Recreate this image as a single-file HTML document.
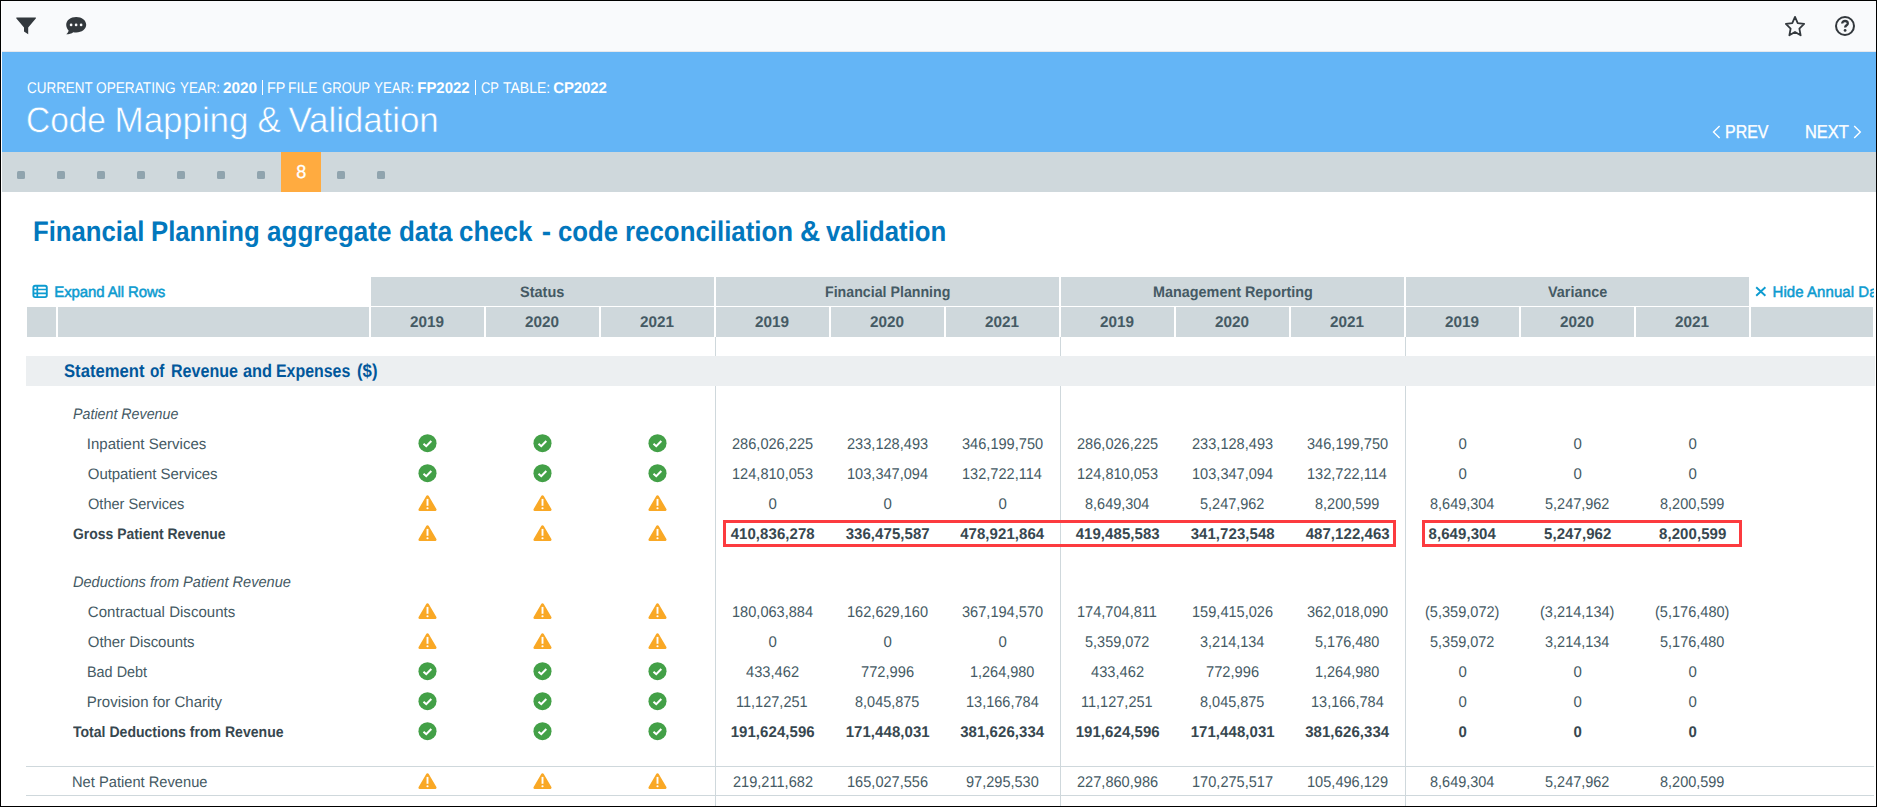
<!DOCTYPE html>
<html lang="en"><head><meta charset="utf-8"><title>Code Mapping &amp; Validation</title>
<style>
html,body{margin:0;padding:0;}
body{width:1877px;height:807px;overflow:hidden;background:#000;font-family:"Liberation Sans", sans-serif;}
#page{position:absolute;left:1px;top:1px;width:1875px;height:805px;background:#fff;overflow:hidden;}
#wrap{position:absolute;left:-1px;top:-1px;width:1877px;height:807px;}
.b{position:absolute;display:block;box-sizing:content-box;}
.t{position:absolute;white-space:pre;line-height:1;font-family:"Liberation Sans", sans-serif;text-rendering:geometricPrecision;}
</style></head><body>
<div id="page"><div id="wrap">
<div class="b" style="left:2px;top:1px;width:1874px;height:51px;background:#f9fafc;"></div>
<div class="b" style="left:2px;top:51px;width:1874px;height:1px;background:#e6e8ec;"></div>
<div class="b" style="left:2px;top:52px;width:1874px;height:100px;background:#64b5f6;"></div>
<div class="b" style="left:2px;top:152px;width:1874px;height:40px;background:#cfd8dc;"></div>
<div class="b" style="left:281px;top:152px;width:40px;height:40px;background:#ffab40;"></div>
<div class="b" style="left:17px;top:170.5px;width:8px;height:8px;background:#90a4ae;border-radius:1.5px;"></div>
<div class="b" style="left:57px;top:170.5px;width:8px;height:8px;background:#90a4ae;border-radius:1.5px;"></div>
<div class="b" style="left:97px;top:170.5px;width:8px;height:8px;background:#90a4ae;border-radius:1.5px;"></div>
<div class="b" style="left:137px;top:170.5px;width:8px;height:8px;background:#90a4ae;border-radius:1.5px;"></div>
<div class="b" style="left:177px;top:170.5px;width:8px;height:8px;background:#90a4ae;border-radius:1.5px;"></div>
<div class="b" style="left:217px;top:170.5px;width:8px;height:8px;background:#90a4ae;border-radius:1.5px;"></div>
<div class="b" style="left:257px;top:170.5px;width:8px;height:8px;background:#90a4ae;border-radius:1.5px;"></div>
<div class="b" style="left:337px;top:170.5px;width:8px;height:8px;background:#90a4ae;border-radius:1.5px;"></div>
<div class="b" style="left:377px;top:170.5px;width:8px;height:8px;background:#90a4ae;border-radius:1.5px;"></div>
<div class="b" style="left:261.8px;top:80.3px;width:1.1px;height:14.4px;background:#fff;"></div>
<div class="b" style="left:474.8px;top:80.3px;width:1.1px;height:14.4px;background:#fff;"></div>
<div class="b" style="left:371px;top:277px;width:343px;height:29px;background:#cfd8dc;"></div>
<div class="b" style="left:716px;top:277px;width:343px;height:29px;background:#cfd8dc;"></div>
<div class="b" style="left:1061px;top:277px;width:343px;height:29px;background:#cfd8dc;"></div>
<div class="b" style="left:1406px;top:277px;width:343px;height:29px;background:#cfd8dc;"></div>
<div class="b" style="left:27px;top:307px;width:29px;height:30px;background:#cfd8dc;"></div>
<div class="b" style="left:58px;top:307px;width:311px;height:30px;background:#cfd8dc;"></div>
<div class="b" style="left:371px;top:307px;width:113px;height:30px;background:#cfd8dc;"></div>
<div class="b" style="left:486px;top:307px;width:113px;height:30px;background:#cfd8dc;"></div>
<div class="b" style="left:601px;top:307px;width:113px;height:30px;background:#cfd8dc;"></div>
<div class="b" style="left:716px;top:307px;width:113px;height:30px;background:#cfd8dc;"></div>
<div class="b" style="left:831px;top:307px;width:113px;height:30px;background:#cfd8dc;"></div>
<div class="b" style="left:946px;top:307px;width:113px;height:30px;background:#cfd8dc;"></div>
<div class="b" style="left:1061px;top:307px;width:113px;height:30px;background:#cfd8dc;"></div>
<div class="b" style="left:1176px;top:307px;width:113px;height:30px;background:#cfd8dc;"></div>
<div class="b" style="left:1291px;top:307px;width:113px;height:30px;background:#cfd8dc;"></div>
<div class="b" style="left:1406px;top:307px;width:113px;height:30px;background:#cfd8dc;"></div>
<div class="b" style="left:1521px;top:307px;width:113px;height:30px;background:#cfd8dc;"></div>
<div class="b" style="left:1636px;top:307px;width:113px;height:30px;background:#cfd8dc;"></div>
<div class="b" style="left:1751px;top:307px;width:122px;height:30px;background:#cfd8dc;"></div>
<div class="b" style="left:715px;top:337px;width:1px;height:469px;background:#cfd8dc;"></div>
<div class="b" style="left:1060px;top:337px;width:1px;height:469px;background:#cfd8dc;"></div>
<div class="b" style="left:1405px;top:337px;width:1px;height:469px;background:#cfd8dc;"></div>
<div class="b" style="left:26px;top:356px;width:1849px;height:30px;background:#eceff1;"></div>
<div class="b" style="left:26px;top:766px;width:1848px;height:1px;background:#cfd8dc;"></div>
<div class="b" style="left:26px;top:795px;width:1848px;height:1px;background:#cfd8dc;"></div>
<div class="b" style="left:723px;top:520px;width:667px;height:21px;background:transparent;border:3px solid #fc3b3f;"></div>
<div class="b" style="left:1422px;top:520px;width:314px;height:21px;background:transparent;border:3px solid #fc3b3f;"></div>
<svg class="b" style="left:416px;top:432px" width="22" height="22" viewBox="0 0 22 22"><g transform="translate(11.50,11.20)"><circle r="9.05" fill="#43a047"/><path d="M-4.0 0.5 L-1.25 2.95 L3.8 -2.2" fill="none" stroke="#fff" stroke-width="2"/></g></svg>
<svg class="b" style="left:531px;top:432px" width="22" height="22" viewBox="0 0 22 22"><g transform="translate(11.50,11.20)"><circle r="9.05" fill="#43a047"/><path d="M-4.0 0.5 L-1.25 2.95 L3.8 -2.2" fill="none" stroke="#fff" stroke-width="2"/></g></svg>
<svg class="b" style="left:646px;top:432px" width="22" height="22" viewBox="0 0 22 22"><g transform="translate(11.50,11.20)"><circle r="9.05" fill="#43a047"/><path d="M-4.0 0.5 L-1.25 2.95 L3.8 -2.2" fill="none" stroke="#fff" stroke-width="2"/></g></svg>
<svg class="b" style="left:416px;top:462px" width="22" height="22" viewBox="0 0 22 22"><g transform="translate(11.50,11.20)"><circle r="9.05" fill="#43a047"/><path d="M-4.0 0.5 L-1.25 2.95 L3.8 -2.2" fill="none" stroke="#fff" stroke-width="2"/></g></svg>
<svg class="b" style="left:531px;top:462px" width="22" height="22" viewBox="0 0 22 22"><g transform="translate(11.50,11.20)"><circle r="9.05" fill="#43a047"/><path d="M-4.0 0.5 L-1.25 2.95 L3.8 -2.2" fill="none" stroke="#fff" stroke-width="2"/></g></svg>
<svg class="b" style="left:646px;top:462px" width="22" height="22" viewBox="0 0 22 22"><g transform="translate(11.50,11.20)"><circle r="9.05" fill="#43a047"/><path d="M-4.0 0.5 L-1.25 2.95 L3.8 -2.2" fill="none" stroke="#fff" stroke-width="2"/></g></svg>
<svg class="b" style="left:416px;top:492px" width="22" height="22" viewBox="0 0 22 22"><g transform="translate(11.50,11.00)"><path d="M0 -6.5 L7.75 6.7 L-7.75 6.7 Z" fill="#f9a825" stroke="#f9a825" stroke-width="2.6" stroke-linejoin="round"/><rect x="-0.95" y="-4.1" width="1.9" height="6.9" fill="#fff"/><circle cx="0" cy="5.25" r="1.1" fill="#fff"/></g></svg>
<svg class="b" style="left:531px;top:492px" width="22" height="22" viewBox="0 0 22 22"><g transform="translate(11.50,11.00)"><path d="M0 -6.5 L7.75 6.7 L-7.75 6.7 Z" fill="#f9a825" stroke="#f9a825" stroke-width="2.6" stroke-linejoin="round"/><rect x="-0.95" y="-4.1" width="1.9" height="6.9" fill="#fff"/><circle cx="0" cy="5.25" r="1.1" fill="#fff"/></g></svg>
<svg class="b" style="left:646px;top:492px" width="22" height="22" viewBox="0 0 22 22"><g transform="translate(11.50,11.00)"><path d="M0 -6.5 L7.75 6.7 L-7.75 6.7 Z" fill="#f9a825" stroke="#f9a825" stroke-width="2.6" stroke-linejoin="round"/><rect x="-0.95" y="-4.1" width="1.9" height="6.9" fill="#fff"/><circle cx="0" cy="5.25" r="1.1" fill="#fff"/></g></svg>
<svg class="b" style="left:416px;top:522px" width="22" height="22" viewBox="0 0 22 22"><g transform="translate(11.50,11.00)"><path d="M0 -6.5 L7.75 6.7 L-7.75 6.7 Z" fill="#f9a825" stroke="#f9a825" stroke-width="2.6" stroke-linejoin="round"/><rect x="-0.95" y="-4.1" width="1.9" height="6.9" fill="#fff"/><circle cx="0" cy="5.25" r="1.1" fill="#fff"/></g></svg>
<svg class="b" style="left:531px;top:522px" width="22" height="22" viewBox="0 0 22 22"><g transform="translate(11.50,11.00)"><path d="M0 -6.5 L7.75 6.7 L-7.75 6.7 Z" fill="#f9a825" stroke="#f9a825" stroke-width="2.6" stroke-linejoin="round"/><rect x="-0.95" y="-4.1" width="1.9" height="6.9" fill="#fff"/><circle cx="0" cy="5.25" r="1.1" fill="#fff"/></g></svg>
<svg class="b" style="left:646px;top:522px" width="22" height="22" viewBox="0 0 22 22"><g transform="translate(11.50,11.00)"><path d="M0 -6.5 L7.75 6.7 L-7.75 6.7 Z" fill="#f9a825" stroke="#f9a825" stroke-width="2.6" stroke-linejoin="round"/><rect x="-0.95" y="-4.1" width="1.9" height="6.9" fill="#fff"/><circle cx="0" cy="5.25" r="1.1" fill="#fff"/></g></svg>
<svg class="b" style="left:416px;top:600px" width="22" height="22" viewBox="0 0 22 22"><g transform="translate(11.50,11.00)"><path d="M0 -6.5 L7.75 6.7 L-7.75 6.7 Z" fill="#f9a825" stroke="#f9a825" stroke-width="2.6" stroke-linejoin="round"/><rect x="-0.95" y="-4.1" width="1.9" height="6.9" fill="#fff"/><circle cx="0" cy="5.25" r="1.1" fill="#fff"/></g></svg>
<svg class="b" style="left:531px;top:600px" width="22" height="22" viewBox="0 0 22 22"><g transform="translate(11.50,11.00)"><path d="M0 -6.5 L7.75 6.7 L-7.75 6.7 Z" fill="#f9a825" stroke="#f9a825" stroke-width="2.6" stroke-linejoin="round"/><rect x="-0.95" y="-4.1" width="1.9" height="6.9" fill="#fff"/><circle cx="0" cy="5.25" r="1.1" fill="#fff"/></g></svg>
<svg class="b" style="left:646px;top:600px" width="22" height="22" viewBox="0 0 22 22"><g transform="translate(11.50,11.00)"><path d="M0 -6.5 L7.75 6.7 L-7.75 6.7 Z" fill="#f9a825" stroke="#f9a825" stroke-width="2.6" stroke-linejoin="round"/><rect x="-0.95" y="-4.1" width="1.9" height="6.9" fill="#fff"/><circle cx="0" cy="5.25" r="1.1" fill="#fff"/></g></svg>
<svg class="b" style="left:416px;top:630px" width="22" height="22" viewBox="0 0 22 22"><g transform="translate(11.50,11.00)"><path d="M0 -6.5 L7.75 6.7 L-7.75 6.7 Z" fill="#f9a825" stroke="#f9a825" stroke-width="2.6" stroke-linejoin="round"/><rect x="-0.95" y="-4.1" width="1.9" height="6.9" fill="#fff"/><circle cx="0" cy="5.25" r="1.1" fill="#fff"/></g></svg>
<svg class="b" style="left:531px;top:630px" width="22" height="22" viewBox="0 0 22 22"><g transform="translate(11.50,11.00)"><path d="M0 -6.5 L7.75 6.7 L-7.75 6.7 Z" fill="#f9a825" stroke="#f9a825" stroke-width="2.6" stroke-linejoin="round"/><rect x="-0.95" y="-4.1" width="1.9" height="6.9" fill="#fff"/><circle cx="0" cy="5.25" r="1.1" fill="#fff"/></g></svg>
<svg class="b" style="left:646px;top:630px" width="22" height="22" viewBox="0 0 22 22"><g transform="translate(11.50,11.00)"><path d="M0 -6.5 L7.75 6.7 L-7.75 6.7 Z" fill="#f9a825" stroke="#f9a825" stroke-width="2.6" stroke-linejoin="round"/><rect x="-0.95" y="-4.1" width="1.9" height="6.9" fill="#fff"/><circle cx="0" cy="5.25" r="1.1" fill="#fff"/></g></svg>
<svg class="b" style="left:416px;top:660px" width="22" height="22" viewBox="0 0 22 22"><g transform="translate(11.50,11.20)"><circle r="9.05" fill="#43a047"/><path d="M-4.0 0.5 L-1.25 2.95 L3.8 -2.2" fill="none" stroke="#fff" stroke-width="2"/></g></svg>
<svg class="b" style="left:531px;top:660px" width="22" height="22" viewBox="0 0 22 22"><g transform="translate(11.50,11.20)"><circle r="9.05" fill="#43a047"/><path d="M-4.0 0.5 L-1.25 2.95 L3.8 -2.2" fill="none" stroke="#fff" stroke-width="2"/></g></svg>
<svg class="b" style="left:646px;top:660px" width="22" height="22" viewBox="0 0 22 22"><g transform="translate(11.50,11.20)"><circle r="9.05" fill="#43a047"/><path d="M-4.0 0.5 L-1.25 2.95 L3.8 -2.2" fill="none" stroke="#fff" stroke-width="2"/></g></svg>
<svg class="b" style="left:416px;top:690px" width="22" height="22" viewBox="0 0 22 22"><g transform="translate(11.50,11.20)"><circle r="9.05" fill="#43a047"/><path d="M-4.0 0.5 L-1.25 2.95 L3.8 -2.2" fill="none" stroke="#fff" stroke-width="2"/></g></svg>
<svg class="b" style="left:531px;top:690px" width="22" height="22" viewBox="0 0 22 22"><g transform="translate(11.50,11.20)"><circle r="9.05" fill="#43a047"/><path d="M-4.0 0.5 L-1.25 2.95 L3.8 -2.2" fill="none" stroke="#fff" stroke-width="2"/></g></svg>
<svg class="b" style="left:646px;top:690px" width="22" height="22" viewBox="0 0 22 22"><g transform="translate(11.50,11.20)"><circle r="9.05" fill="#43a047"/><path d="M-4.0 0.5 L-1.25 2.95 L3.8 -2.2" fill="none" stroke="#fff" stroke-width="2"/></g></svg>
<svg class="b" style="left:416px;top:720px" width="22" height="22" viewBox="0 0 22 22"><g transform="translate(11.50,11.20)"><circle r="9.05" fill="#43a047"/><path d="M-4.0 0.5 L-1.25 2.95 L3.8 -2.2" fill="none" stroke="#fff" stroke-width="2"/></g></svg>
<svg class="b" style="left:531px;top:720px" width="22" height="22" viewBox="0 0 22 22"><g transform="translate(11.50,11.20)"><circle r="9.05" fill="#43a047"/><path d="M-4.0 0.5 L-1.25 2.95 L3.8 -2.2" fill="none" stroke="#fff" stroke-width="2"/></g></svg>
<svg class="b" style="left:646px;top:720px" width="22" height="22" viewBox="0 0 22 22"><g transform="translate(11.50,11.20)"><circle r="9.05" fill="#43a047"/><path d="M-4.0 0.5 L-1.25 2.95 L3.8 -2.2" fill="none" stroke="#fff" stroke-width="2"/></g></svg>
<svg class="b" style="left:416px;top:770px" width="22" height="22" viewBox="0 0 22 22"><g transform="translate(11.50,11.00)"><path d="M0 -6.5 L7.75 6.7 L-7.75 6.7 Z" fill="#f9a825" stroke="#f9a825" stroke-width="2.6" stroke-linejoin="round"/><rect x="-0.95" y="-4.1" width="1.9" height="6.9" fill="#fff"/><circle cx="0" cy="5.25" r="1.1" fill="#fff"/></g></svg>
<svg class="b" style="left:531px;top:770px" width="22" height="22" viewBox="0 0 22 22"><g transform="translate(11.50,11.00)"><path d="M0 -6.5 L7.75 6.7 L-7.75 6.7 Z" fill="#f9a825" stroke="#f9a825" stroke-width="2.6" stroke-linejoin="round"/><rect x="-0.95" y="-4.1" width="1.9" height="6.9" fill="#fff"/><circle cx="0" cy="5.25" r="1.1" fill="#fff"/></g></svg>
<svg class="b" style="left:646px;top:770px" width="22" height="22" viewBox="0 0 22 22"><g transform="translate(11.50,11.00)"><path d="M0 -6.5 L7.75 6.7 L-7.75 6.7 Z" fill="#f9a825" stroke="#f9a825" stroke-width="2.6" stroke-linejoin="round"/><rect x="-0.95" y="-4.1" width="1.9" height="6.9" fill="#fff"/><circle cx="0" cy="5.25" r="1.1" fill="#fff"/></g></svg>
<svg class="b" style="left:14px;top:15px" width="24" height="22" viewBox="0 0 24 22"><path d="M2.9 2.4 H21.3 Q22.6 2.4 21.8 3.5 L14.2 12.6 V19.2 L10 16.4 V12.6 L2.4 3.5 Q1.6 2.4 2.9 2.4 Z" fill="#33383d"/></svg>
<svg class="b" style="left:64px;top:15px" width="24" height="22" viewBox="0 0 24 22"><path d="M12.2 2.1 C17.8 2.1 22.2 5.5 22.2 9.8 C22.2 14.1 17.8 17.5 12.2 17.5 C11.2 17.5 10.2 17.4 9.3 17.2 C7.6 18.5 5 19.3 2.2 19.3 C3.6 18.2 4.4 16.8 4.6 15.4 C3.1 14 2.2 12 2.2 9.8 C2.2 5.5 6.6 2.1 12.2 2.1 Z" fill="#33383d"/><circle cx="7.1" cy="9.9" r="1.35" fill="#f9fafc"/><circle cx="12.1" cy="9.9" r="1.35" fill="#f9fafc"/><circle cx="17.1" cy="9.9" r="1.35" fill="#f9fafc"/></svg>
<svg class="b" style="left:1783px;top:14px" width="24" height="24" viewBox="0 0 24 24"><polygon points="12.00,2.90 14.71,9.14 21.12,9.95 16.38,14.61 17.64,21.35 12.00,18.00 6.36,21.35 7.62,14.61 2.88,9.95 9.29,9.14" fill="none" stroke="#33383d" stroke-width="1.8" stroke-linejoin="round"/></svg>
<svg class="b" style="left:1833px;top:14px" width="24" height="24" viewBox="0 0 24 24"><circle cx="12" cy="12" r="9" fill="none" stroke="#33383d" stroke-width="2"/><path d="M9.2 9.6 C9.2 7.9 10.5 7 12 7 C13.6 7 14.8 7.9 14.8 9.4 C14.8 11.3 12.1 11.3 12.1 13.6" fill="none" stroke="#33383d" stroke-width="2.3"/><circle cx="12.1" cy="16.4" r="1.4" fill="#33383d"/></svg>
<svg class="b" style="left:1710px;top:122px" width="14" height="20" viewBox="0 0 14 20"><path d="M9.6 3.9 L3.5 10 L9.6 16.1" fill="none" stroke="#fff" stroke-width="1.4"/></svg>
<svg class="b" style="left:1850px;top:122px" width="14" height="20" viewBox="0 0 14 20"><path d="M4.2 3.9 L10.3 10 L4.2 16.1" fill="none" stroke="#fff" stroke-width="1.4"/></svg>
<svg class="b" style="left:31px;top:283px" width="18" height="17" viewBox="0 0 18 17"><rect x="2.4" y="2.7" width="13.4" height="11.4" rx="1.8" fill="none" stroke="#0d9bd0" stroke-width="1.9"/><path d="M2.4 6.5 H15.8 M2.4 10.3 H15.8 M6.3 2.7 V14.1" stroke="#0d9bd0" stroke-width="1.7" fill="none"/></svg>
<svg class="b" style="left:1753px;top:284px" width="16" height="16" viewBox="0 0 16 16"><path d="M3.2 3.2 L12.4 11.8 M12.4 3.2 L3.2 11.8" stroke="#0d9bd0" stroke-width="1.9" fill="none"/></svg>
<span class="t" style="left:26.60px;top:81px;font-size:15px;color:#ffffff;transform:scale(0.8966,1.034);transform-origin:0 12px;">CURRENT</span>
<span class="t" style="left:96.30px;top:81px;font-size:15px;color:#ffffff;transform:scale(0.9115,1.034);transform-origin:0 12px;">OPERATING</span>
<span class="t" style="left:179.80px;top:81px;font-size:15px;color:#ffffff;transform:scale(0.8895,1.034);transform-origin:0 12px;">YEAR:</span>
<span class="t" style="left:222.90px;top:81px;font-size:15px;color:#ffffff;font-weight:700;transform:scale(1.0234,1.034);transform-origin:0 12px;">2020</span>
<span class="t" style="left:267.14px;top:81px;font-size:15px;color:#ffffff;transform:scale(0.9580,1.034);transform-origin:0 12px;">FP</span>
<span class="t" style="left:288.47px;top:81px;font-size:15px;color:#ffffff;transform:scale(0.9292,1.034);transform-origin:0 12px;">FILE</span>
<span class="t" style="left:322.20px;top:81px;font-size:15px;color:#ffffff;transform:scale(0.8745,1.034);transform-origin:0 12px;">GROUP</span>
<span class="t" style="left:374.30px;top:81px;font-size:15px;color:#ffffff;transform:scale(0.8895,1.034);transform-origin:0 12px;">YEAR:</span>
<span class="t" style="left:417.30px;top:81px;font-size:15px;color:#ffffff;font-weight:700;letter-spacing:-0.059px;transform:scale(1.0000,1.034);transform-origin:0 12px;">FP2022</span>
<span class="t" style="left:480.80px;top:81px;font-size:15px;color:#ffffff;transform:scale(0.8592,1.034);transform-origin:0 12px;">CP</span>
<span class="t" style="left:502.80px;top:81px;font-size:15px;color:#ffffff;transform:scale(0.9311,1.034);transform-origin:0 12px;">TABLE:</span>
<span class="t" style="left:553.30px;top:81px;font-size:15px;color:#ffffff;font-weight:700;letter-spacing:-0.153px;transform:scale(1.0000,1.034);transform-origin:0 12px;">CP2022</span>
<span class="t" style="left:26.44px;top:103px;font-size:35px;color:#ffffff;transform:scale(0.9556,1.015);transform-origin:0 29px;-webkit-text-stroke:0.55px #64b5f6;">Code</span>
<span class="t" style="left:114.60px;top:103px;font-size:35px;color:#ffffff;letter-spacing:-0.065px;transform:scale(1.0000,1.015);transform-origin:0 29px;-webkit-text-stroke:0.55px #64b5f6;">Mapping</span>
<span class="t" style="left:257.60px;top:103px;font-size:35px;color:#ffffff;transform:scale(1.0000,1.034);transform-origin:0 29px;-webkit-text-stroke:0.55px #64b5f6;">&amp;</span>
<span class="t" style="left:288.40px;top:103px;font-size:35px;color:#ffffff;letter-spacing:-0.084px;transform:scale(1.0000,1.015);transform-origin:0 29px;-webkit-text-stroke:0.55px #64b5f6;">Validation</span>
<span class="t" style="left:1724.71px;top:123px;font-size:18px;color:#ffffff;transform:scale(0.8852,1.034);transform-origin:0 15px;-webkit-text-stroke:0.35px #ffffff;">PREV</span>
<span class="t" style="left:1804.69px;top:123px;font-size:18px;color:#ffffff;transform:scale(0.9126,1.034);transform-origin:0 15px;-webkit-text-stroke:0.35px #ffffff;">NEXT</span>
<span class="t" style="left:296.25px;top:163px;font-size:18px;color:#ffffff;transform:scale(1.0000,1.034);transform-origin:0 15px;-webkit-text-stroke:0.3px #ffffff;">8</span>
<span class="t" style="left:33.18px;top:218px;font-size:28px;color:#0277bd;font-weight:700;transform:scale(0.9183,1.015);transform-origin:0 23px;">Financial</span>
<span class="t" style="left:151.38px;top:218px;font-size:28px;color:#0277bd;font-weight:700;transform:scale(0.9189,1.015);transform-origin:0 23px;">Planning</span>
<span class="t" style="left:267.40px;top:218px;font-size:28px;color:#0277bd;font-weight:700;transform:scale(0.9298,1.015);transform-origin:0 23px;">aggregate</span>
<span class="t" style="left:398.77px;top:218px;font-size:28px;color:#0277bd;font-weight:700;transform:scale(0.9281,1.015);transform-origin:0 23px;">data</span>
<span class="t" style="left:459.38px;top:218px;font-size:28px;color:#0277bd;font-weight:700;transform:scale(0.9249,1.015);transform-origin:0 23px;">check</span>
<span class="t" style="left:541.80px;top:218px;font-size:28px;color:#0277bd;font-weight:700;transform:scale(1.0000,1.034);transform-origin:0 23px;">-</span>
<span class="t" style="left:557.98px;top:218px;font-size:28px;color:#0277bd;font-weight:700;transform:scale(0.9204,1.015);transform-origin:0 23px;">code</span>
<span class="t" style="left:625.08px;top:218px;font-size:28px;color:#0277bd;font-weight:700;transform:scale(0.9237,1.015);transform-origin:0 23px;">reconciliation</span>
<span class="t" style="left:800.00px;top:218px;font-size:28px;color:#0277bd;font-weight:700;transform:scale(1.0000,1.034);transform-origin:0 23px;">&amp;</span>
<span class="t" style="left:825.80px;top:218px;font-size:28px;color:#0277bd;font-weight:700;transform:scale(0.9206,1.015);transform-origin:0 23px;">validation</span>
<span class="t" style="left:54.30px;top:285px;font-size:15px;color:#0d9bd0;letter-spacing:-0.113px;transform:scale(1.0000,1.015);transform-origin:0 12px;-webkit-text-stroke:0.5px #0d9bd0;">Expand All Rows</span>
<div class="b" style="left:1770px;top:281px;width:104px;height:25px;overflow:hidden;"><span class="t" style="left:2.60px;top:4px;font-size:15px;color:#0d9bd0;letter-spacing:0.051px;transform:scale(1.0000,1.015);transform-origin:0 12px;-webkit-text-stroke:0.5px #0d9bd0;">Hide Annual Data</span></div>
<span class="t" style="left:520.20px;top:285px;font-size:15px;color:#455a64;font-weight:700;transform:scale(0.9670,1.015);transform-origin:0 12px;">Status</span>
<span class="t" style="left:825.00px;top:285px;font-size:15px;color:#455a64;font-weight:700;transform:scale(0.9463,1.015);transform-origin:0 12px;">Financial Planning</span>
<span class="t" style="left:1152.94px;top:285px;font-size:15px;color:#455a64;font-weight:700;transform:scale(0.9594,1.015);transform-origin:0 12px;">Management Reporting</span>
<span class="t" style="left:1548.00px;top:285px;font-size:15px;color:#455a64;font-weight:700;transform:scale(0.9614,1.015);transform-origin:0 12px;">Variance</span>
<span class="t" style="left:410.05px;top:315px;font-size:15px;color:#455a64;font-weight:700;transform:scale(1.0204,1.034);transform-origin:0 12px;">2019</span>
<span class="t" style="left:525.05px;top:315px;font-size:15px;color:#455a64;font-weight:700;transform:scale(1.0204,1.034);transform-origin:0 12px;">2020</span>
<span class="t" style="left:640.05px;top:315px;font-size:15px;color:#455a64;font-weight:700;transform:scale(1.0204,1.034);transform-origin:0 12px;">2021</span>
<span class="t" style="left:755.05px;top:315px;font-size:15px;color:#455a64;font-weight:700;transform:scale(1.0204,1.034);transform-origin:0 12px;">2019</span>
<span class="t" style="left:870.05px;top:315px;font-size:15px;color:#455a64;font-weight:700;transform:scale(1.0204,1.034);transform-origin:0 12px;">2020</span>
<span class="t" style="left:985.05px;top:315px;font-size:15px;color:#455a64;font-weight:700;transform:scale(1.0204,1.034);transform-origin:0 12px;">2021</span>
<span class="t" style="left:1100.05px;top:315px;font-size:15px;color:#455a64;font-weight:700;transform:scale(1.0204,1.034);transform-origin:0 12px;">2019</span>
<span class="t" style="left:1215.05px;top:315px;font-size:15px;color:#455a64;font-weight:700;transform:scale(1.0204,1.034);transform-origin:0 12px;">2020</span>
<span class="t" style="left:1330.05px;top:315px;font-size:15px;color:#455a64;font-weight:700;transform:scale(1.0204,1.034);transform-origin:0 12px;">2021</span>
<span class="t" style="left:1445.05px;top:315px;font-size:15px;color:#455a64;font-weight:700;transform:scale(1.0204,1.034);transform-origin:0 12px;">2019</span>
<span class="t" style="left:1560.05px;top:315px;font-size:15px;color:#455a64;font-weight:700;transform:scale(1.0204,1.034);transform-origin:0 12px;">2020</span>
<span class="t" style="left:1675.05px;top:315px;font-size:15px;color:#455a64;font-weight:700;transform:scale(1.0204,1.034);transform-origin:0 12px;">2021</span>
<span class="t" style="left:64.00px;top:362px;font-size:18px;color:#01579b;font-weight:700;transform:scale(0.9250,1.015);transform-origin:0 15px;">Statement</span>
<span class="t" style="left:150.30px;top:362px;font-size:18px;color:#01579b;font-weight:700;transform:scale(0.8502,1.015);transform-origin:0 15px;">of</span>
<span class="t" style="left:170.51px;top:362px;font-size:18px;color:#01579b;font-weight:700;transform:scale(0.8930,1.015);transform-origin:0 15px;">Revenue</span>
<span class="t" style="left:242.90px;top:362px;font-size:18px;color:#01579b;font-weight:700;transform:scale(0.9095,1.015);transform-origin:0 15px;">and</span>
<span class="t" style="left:276.02px;top:362px;font-size:18px;color:#01579b;font-weight:700;transform:scale(0.8839,1.015);transform-origin:0 15px;">Expenses</span>
<span class="t" style="left:356.50px;top:362px;font-size:18px;color:#01579b;font-weight:700;transform:scale(0.9316,1.034);transform-origin:0 15px;">($)</span>
<span class="t" style="left:72.50px;top:407px;font-size:15px;color:#455a64;font-style:italic;transform:scale(0.9496,1.015);transform-origin:0 12px;">Patient Revenue</span>
<span class="t" style="left:86.80px;top:437px;font-size:15px;color:#455a64;letter-spacing:0.016px;transform:scale(1.0000,1.015);transform-origin:0 12px;">Inpatient Services</span>
<span class="t" style="left:732.11px;top:437px;font-size:15px;color:#455a64;transform:scale(0.9723,1.034);transform-origin:0 12px;">286,026,225</span>
<span class="t" style="left:847.11px;top:437px;font-size:15px;color:#455a64;transform:scale(0.9723,1.034);transform-origin:0 12px;">233,128,493</span>
<span class="t" style="left:962.11px;top:437px;font-size:15px;color:#455a64;transform:scale(0.9723,1.034);transform-origin:0 12px;">346,199,750</span>
<span class="t" style="left:1077.11px;top:437px;font-size:15px;color:#455a64;transform:scale(0.9723,1.034);transform-origin:0 12px;">286,026,225</span>
<span class="t" style="left:1192.11px;top:437px;font-size:15px;color:#455a64;transform:scale(0.9723,1.034);transform-origin:0 12px;">233,128,493</span>
<span class="t" style="left:1307.11px;top:437px;font-size:15px;color:#455a64;transform:scale(0.9723,1.034);transform-origin:0 12px;">346,199,750</span>
<span class="t" style="left:1458.50px;top:437px;font-size:15px;color:#455a64;transform:scale(1.0000,1.034);transform-origin:0 12px;">0</span>
<span class="t" style="left:1573.50px;top:437px;font-size:15px;color:#455a64;transform:scale(1.0000,1.034);transform-origin:0 12px;">0</span>
<span class="t" style="left:1688.50px;top:437px;font-size:15px;color:#455a64;transform:scale(1.0000,1.034);transform-origin:0 12px;">0</span>
<span class="t" style="left:87.80px;top:467px;font-size:15px;color:#455a64;letter-spacing:-0.061px;transform:scale(1.0000,1.015);transform-origin:0 12px;">Outpatient Services</span>
<span class="t" style="left:731.64px;top:467px;font-size:15px;color:#455a64;transform:scale(0.9720,1.034);transform-origin:0 12px;">124,810,053</span>
<span class="t" style="left:846.64px;top:467px;font-size:15px;color:#455a64;transform:scale(0.9720,1.034);transform-origin:0 12px;">103,347,094</span>
<span class="t" style="left:962.20px;top:467px;font-size:15px;color:#455a64;transform:scale(0.9716,1.034);transform-origin:0 12px;">132,722,114</span>
<span class="t" style="left:1076.64px;top:467px;font-size:15px;color:#455a64;transform:scale(0.9720,1.034);transform-origin:0 12px;">124,810,053</span>
<span class="t" style="left:1191.64px;top:467px;font-size:15px;color:#455a64;transform:scale(0.9720,1.034);transform-origin:0 12px;">103,347,094</span>
<span class="t" style="left:1307.20px;top:467px;font-size:15px;color:#455a64;transform:scale(0.9716,1.034);transform-origin:0 12px;">132,722,114</span>
<span class="t" style="left:1458.50px;top:467px;font-size:15px;color:#455a64;transform:scale(1.0000,1.034);transform-origin:0 12px;">0</span>
<span class="t" style="left:1573.50px;top:467px;font-size:15px;color:#455a64;transform:scale(1.0000,1.034);transform-origin:0 12px;">0</span>
<span class="t" style="left:1688.50px;top:467px;font-size:15px;color:#455a64;transform:scale(1.0000,1.034);transform-origin:0 12px;">0</span>
<span class="t" style="left:87.80px;top:497px;font-size:15px;color:#455a64;transform:scale(0.9716,1.015);transform-origin:0 12px;">Other Services</span>
<span class="t" style="left:768.50px;top:497px;font-size:15px;color:#455a64;transform:scale(1.0000,1.034);transform-origin:0 12px;">0</span>
<span class="t" style="left:883.50px;top:497px;font-size:15px;color:#455a64;transform:scale(1.0000,1.034);transform-origin:0 12px;">0</span>
<span class="t" style="left:998.50px;top:497px;font-size:15px;color:#455a64;transform:scale(1.0000,1.034);transform-origin:0 12px;">0</span>
<span class="t" style="left:1085.46px;top:497px;font-size:15px;color:#455a64;transform:scale(0.9654,1.034);transform-origin:0 12px;">8,649,304</span>
<span class="t" style="left:1200.46px;top:497px;font-size:15px;color:#455a64;transform:scale(0.9654,1.034);transform-origin:0 12px;">5,247,962</span>
<span class="t" style="left:1315.46px;top:497px;font-size:15px;color:#455a64;transform:scale(0.9654,1.034);transform-origin:0 12px;">8,200,599</span>
<span class="t" style="left:1430.46px;top:497px;font-size:15px;color:#455a64;transform:scale(0.9654,1.034);transform-origin:0 12px;">8,649,304</span>
<span class="t" style="left:1545.46px;top:497px;font-size:15px;color:#455a64;transform:scale(0.9654,1.034);transform-origin:0 12px;">5,247,962</span>
<span class="t" style="left:1660.46px;top:497px;font-size:15px;color:#455a64;transform:scale(0.9654,1.034);transform-origin:0 12px;">8,200,599</span>
<span class="t" style="left:72.90px;top:527px;font-size:15px;color:#37474f;font-weight:700;transform:scale(0.9293,1.015);transform-origin:0 12px;">Gross Patient Revenue</span>
<span class="t" style="left:730.66px;top:527px;font-size:15px;color:#37474f;font-weight:700;letter-spacing:0.060px;transform:scale(1.0000,1.034);transform-origin:0 12px;">410,836,278</span>
<span class="t" style="left:845.66px;top:527px;font-size:15px;color:#37474f;font-weight:700;letter-spacing:0.060px;transform:scale(1.0000,1.034);transform-origin:0 12px;">336,475,587</span>
<span class="t" style="left:960.16px;top:527px;font-size:15px;color:#37474f;font-weight:700;letter-spacing:0.060px;transform:scale(1.0000,1.034);transform-origin:0 12px;">478,921,864</span>
<span class="t" style="left:1075.66px;top:527px;font-size:15px;color:#37474f;font-weight:700;letter-spacing:0.060px;transform:scale(1.0000,1.034);transform-origin:0 12px;">419,485,583</span>
<span class="t" style="left:1190.66px;top:527px;font-size:15px;color:#37474f;font-weight:700;letter-spacing:0.060px;transform:scale(1.0000,1.034);transform-origin:0 12px;">341,723,548</span>
<span class="t" style="left:1305.66px;top:527px;font-size:15px;color:#37474f;font-weight:700;letter-spacing:0.060px;transform:scale(1.0000,1.034);transform-origin:0 12px;">487,122,463</span>
<span class="t" style="left:1428.57px;top:527px;font-size:15px;color:#37474f;font-weight:700;letter-spacing:0.060px;transform:scale(1.0000,1.034);transform-origin:0 12px;">8,649,304</span>
<span class="t" style="left:1544.07px;top:527px;font-size:15px;color:#37474f;font-weight:700;letter-spacing:0.060px;transform:scale(1.0000,1.034);transform-origin:0 12px;">5,247,962</span>
<span class="t" style="left:1659.07px;top:527px;font-size:15px;color:#37474f;font-weight:700;letter-spacing:0.060px;transform:scale(1.0000,1.034);transform-origin:0 12px;">8,200,599</span>
<span class="t" style="left:72.90px;top:575px;font-size:15px;color:#455a64;font-style:italic;transform:scale(0.9712,1.015);transform-origin:0 12px;">Deductions from Patient Revenue</span>
<span class="t" style="left:87.80px;top:605px;font-size:15px;color:#455a64;letter-spacing:0.038px;transform:scale(1.0000,1.015);transform-origin:0 12px;">Contractual Discounts</span>
<span class="t" style="left:731.64px;top:605px;font-size:15px;color:#455a64;transform:scale(0.9720,1.034);transform-origin:0 12px;">180,063,884</span>
<span class="t" style="left:846.64px;top:605px;font-size:15px;color:#455a64;transform:scale(0.9720,1.034);transform-origin:0 12px;">162,629,160</span>
<span class="t" style="left:962.11px;top:605px;font-size:15px;color:#455a64;transform:scale(0.9723,1.034);transform-origin:0 12px;">367,194,570</span>
<span class="t" style="left:1077.20px;top:605px;font-size:15px;color:#455a64;transform:scale(0.9716,1.034);transform-origin:0 12px;">174,704,811</span>
<span class="t" style="left:1191.64px;top:605px;font-size:15px;color:#455a64;transform:scale(0.9720,1.034);transform-origin:0 12px;">159,415,026</span>
<span class="t" style="left:1307.11px;top:605px;font-size:15px;color:#455a64;transform:scale(0.9723,1.034);transform-origin:0 12px;">362,018,090</span>
<span class="t" style="left:1425.29px;top:605px;font-size:15px;color:#455a64;transform:scale(0.9700,1.034);transform-origin:0 12px;">(5,359,072)</span>
<span class="t" style="left:1540.29px;top:605px;font-size:15px;color:#455a64;transform:scale(0.9700,1.034);transform-origin:0 12px;">(3,214,134)</span>
<span class="t" style="left:1655.29px;top:605px;font-size:15px;color:#455a64;transform:scale(0.9700,1.034);transform-origin:0 12px;">(5,176,480)</span>
<span class="t" style="left:87.80px;top:635px;font-size:15px;color:#455a64;letter-spacing:-0.053px;transform:scale(1.0000,1.015);transform-origin:0 12px;">Other Discounts</span>
<span class="t" style="left:768.50px;top:635px;font-size:15px;color:#455a64;transform:scale(1.0000,1.034);transform-origin:0 12px;">0</span>
<span class="t" style="left:883.50px;top:635px;font-size:15px;color:#455a64;transform:scale(1.0000,1.034);transform-origin:0 12px;">0</span>
<span class="t" style="left:998.50px;top:635px;font-size:15px;color:#455a64;transform:scale(1.0000,1.034);transform-origin:0 12px;">0</span>
<span class="t" style="left:1085.46px;top:635px;font-size:15px;color:#455a64;transform:scale(0.9654,1.034);transform-origin:0 12px;">5,359,072</span>
<span class="t" style="left:1200.46px;top:635px;font-size:15px;color:#455a64;transform:scale(0.9654,1.034);transform-origin:0 12px;">3,214,134</span>
<span class="t" style="left:1315.46px;top:635px;font-size:15px;color:#455a64;transform:scale(0.9654,1.034);transform-origin:0 12px;">5,176,480</span>
<span class="t" style="left:1430.46px;top:635px;font-size:15px;color:#455a64;transform:scale(0.9654,1.034);transform-origin:0 12px;">5,359,072</span>
<span class="t" style="left:1545.46px;top:635px;font-size:15px;color:#455a64;transform:scale(0.9654,1.034);transform-origin:0 12px;">3,214,134</span>
<span class="t" style="left:1660.46px;top:635px;font-size:15px;color:#455a64;transform:scale(0.9654,1.034);transform-origin:0 12px;">5,176,480</span>
<span class="t" style="left:86.84px;top:665px;font-size:15px;color:#455a64;transform:scale(0.9603,1.015);transform-origin:0 12px;">Bad Debt</span>
<span class="t" style="left:746.14px;top:665px;font-size:15px;color:#455a64;transform:scale(0.9787,1.034);transform-origin:0 12px;">433,462</span>
<span class="t" style="left:861.14px;top:665px;font-size:15px;color:#455a64;transform:scale(0.9787,1.034);transform-origin:0 12px;">772,996</span>
<span class="t" style="left:969.99px;top:665px;font-size:15px;color:#455a64;transform:scale(0.9648,1.034);transform-origin:0 12px;">1,264,980</span>
<span class="t" style="left:1091.14px;top:665px;font-size:15px;color:#455a64;transform:scale(0.9787,1.034);transform-origin:0 12px;">433,462</span>
<span class="t" style="left:1206.14px;top:665px;font-size:15px;color:#455a64;transform:scale(0.9787,1.034);transform-origin:0 12px;">772,996</span>
<span class="t" style="left:1314.99px;top:665px;font-size:15px;color:#455a64;transform:scale(0.9648,1.034);transform-origin:0 12px;">1,264,980</span>
<span class="t" style="left:1458.50px;top:665px;font-size:15px;color:#455a64;transform:scale(1.0000,1.034);transform-origin:0 12px;">0</span>
<span class="t" style="left:1573.50px;top:665px;font-size:15px;color:#455a64;transform:scale(1.0000,1.034);transform-origin:0 12px;">0</span>
<span class="t" style="left:1688.50px;top:665px;font-size:15px;color:#455a64;transform:scale(1.0000,1.034);transform-origin:0 12px;">0</span>
<span class="t" style="left:86.80px;top:695px;font-size:15px;color:#455a64;letter-spacing:0.008px;transform:scale(1.0000,1.015);transform-origin:0 12px;">Provision for Charity</span>
<span class="t" style="left:736.37px;top:695px;font-size:15px;color:#455a64;transform:scale(0.9683,1.034);transform-origin:0 12px;">11,127,251</span>
<span class="t" style="left:855.46px;top:695px;font-size:15px;color:#455a64;transform:scale(0.9654,1.034);transform-origin:0 12px;">8,045,875</span>
<span class="t" style="left:965.82px;top:695px;font-size:15px;color:#455a64;transform:scale(0.9688,1.034);transform-origin:0 12px;">13,166,784</span>
<span class="t" style="left:1081.37px;top:695px;font-size:15px;color:#455a64;transform:scale(0.9683,1.034);transform-origin:0 12px;">11,127,251</span>
<span class="t" style="left:1200.46px;top:695px;font-size:15px;color:#455a64;transform:scale(0.9654,1.034);transform-origin:0 12px;">8,045,875</span>
<span class="t" style="left:1310.82px;top:695px;font-size:15px;color:#455a64;transform:scale(0.9688,1.034);transform-origin:0 12px;">13,166,784</span>
<span class="t" style="left:1458.50px;top:695px;font-size:15px;color:#455a64;transform:scale(1.0000,1.034);transform-origin:0 12px;">0</span>
<span class="t" style="left:1573.50px;top:695px;font-size:15px;color:#455a64;transform:scale(1.0000,1.034);transform-origin:0 12px;">0</span>
<span class="t" style="left:1688.50px;top:695px;font-size:15px;color:#455a64;transform:scale(1.0000,1.034);transform-origin:0 12px;">0</span>
<span class="t" style="left:72.90px;top:725px;font-size:15px;color:#37474f;font-weight:700;transform:scale(0.9367,1.015);transform-origin:0 12px;">Total Deductions from Revenue</span>
<span class="t" style="left:730.66px;top:725px;font-size:15px;color:#37474f;font-weight:700;letter-spacing:0.060px;transform:scale(1.0000,1.034);transform-origin:0 12px;">191,624,596</span>
<span class="t" style="left:845.66px;top:725px;font-size:15px;color:#37474f;font-weight:700;letter-spacing:0.060px;transform:scale(1.0000,1.034);transform-origin:0 12px;">171,448,031</span>
<span class="t" style="left:960.16px;top:725px;font-size:15px;color:#37474f;font-weight:700;letter-spacing:0.060px;transform:scale(1.0000,1.034);transform-origin:0 12px;">381,626,334</span>
<span class="t" style="left:1075.66px;top:725px;font-size:15px;color:#37474f;font-weight:700;letter-spacing:0.060px;transform:scale(1.0000,1.034);transform-origin:0 12px;">191,624,596</span>
<span class="t" style="left:1190.66px;top:725px;font-size:15px;color:#37474f;font-weight:700;letter-spacing:0.060px;transform:scale(1.0000,1.034);transform-origin:0 12px;">171,448,031</span>
<span class="t" style="left:1305.16px;top:725px;font-size:15px;color:#37474f;font-weight:700;letter-spacing:0.060px;transform:scale(1.0000,1.034);transform-origin:0 12px;">381,626,334</span>
<span class="t" style="left:1458.50px;top:725px;font-size:15px;color:#37474f;font-weight:700;transform:scale(1.0000,1.034);transform-origin:0 12px;">0</span>
<span class="t" style="left:1573.50px;top:725px;font-size:15px;color:#37474f;font-weight:700;transform:scale(1.0000,1.034);transform-origin:0 12px;">0</span>
<span class="t" style="left:1688.50px;top:725px;font-size:15px;color:#37474f;font-weight:700;transform:scale(1.0000,1.034);transform-origin:0 12px;">0</span>
<span class="t" style="left:71.92px;top:775px;font-size:15px;color:#455a64;transform:scale(0.9790,1.015);transform-origin:0 12px;">Net Patient Revenue</span>
<span class="t" style="left:732.67px;top:775px;font-size:15px;color:#455a64;transform:scale(0.9719,1.034);transform-origin:0 12px;">219,211,682</span>
<span class="t" style="left:846.64px;top:775px;font-size:15px;color:#455a64;transform:scale(0.9720,1.034);transform-origin:0 12px;">165,027,556</span>
<span class="t" style="left:966.28px;top:775px;font-size:15px;color:#455a64;transform:scale(0.9692,1.034);transform-origin:0 12px;">97,295,530</span>
<span class="t" style="left:1077.11px;top:775px;font-size:15px;color:#455a64;transform:scale(0.9723,1.034);transform-origin:0 12px;">227,860,986</span>
<span class="t" style="left:1191.64px;top:775px;font-size:15px;color:#455a64;transform:scale(0.9720,1.034);transform-origin:0 12px;">170,275,517</span>
<span class="t" style="left:1306.64px;top:775px;font-size:15px;color:#455a64;transform:scale(0.9720,1.034);transform-origin:0 12px;">105,496,129</span>
<span class="t" style="left:1430.46px;top:775px;font-size:15px;color:#455a64;transform:scale(0.9654,1.034);transform-origin:0 12px;">8,649,304</span>
<span class="t" style="left:1545.46px;top:775px;font-size:15px;color:#455a64;transform:scale(0.9654,1.034);transform-origin:0 12px;">5,247,962</span>
<span class="t" style="left:1660.46px;top:775px;font-size:15px;color:#455a64;transform:scale(0.9654,1.034);transform-origin:0 12px;">8,200,599</span>
</div></div>
</body></html>
